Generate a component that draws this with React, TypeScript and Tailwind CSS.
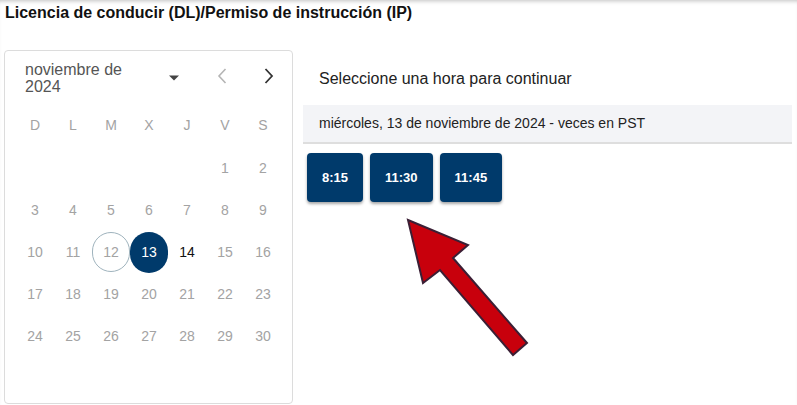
import React from "react";

const NAVY = "bg-[#003a6b]";

const weeks: (number | null)[][] = [
  [null, null, null, null, null, 1, 2],
  [3, 4, 5, 6, 7, 8, 9],
  [10, 11, 12, 13, 14, 15, 16],
  [17, 18, 19, 20, 21, 22, 23],
  [24, 25, 26, 27, 28, 29, 30],
];

function Day({ d }: { d: number | null }) {
  if (d === null) return <div className="h-[42px]" />;
  let inner: React.ReactNode;
  if (d === 13) {
    inner = (
      <div className={`w-[41px] h-[41px] rounded-full ${NAVY} text-white flex items-center justify-center`}>
        13
      </div>
    );
  } else if (d === 12) {
    inner = (
      <div className="w-[40px] h-[40px] rounded-full border border-[#9fb3bd] text-[#a3a3a3] flex items-center justify-center">
        12
      </div>
    );
  } else {
    inner = <span className={d === 14 ? "text-[#111]" : "text-[#a3a3a3]"}>{d}</span>;
  }
  return (
    <div className="h-[42px] w-[38px] flex items-center justify-center overflow-visible">
      {inner}
    </div>
  );
}

export default function App() {
  return (
    <div
      className="relative w-[797px] h-[405px] bg-white overflow-hidden shadow-[inset_0_4px_4px_-3px_rgba(0,0,0,0.25)]"
      style={{ fontFamily: '"Liberation Sans", Arial, sans-serif' }}
    >
      <h1 className="pl-[5px] pt-[2px] text-[16px] leading-[22px] font-bold text-[#111]">
        Licencia de conducir (DL)/Permiso de instrucción (IP)
      </h1>

      <div className="flex mt-[26px] pl-[4px]">
        {/* Calendar card */}
        <div className="w-[289px] h-[354px] border border-[#dcdcdc] rounded-[4px] px-[11px] pt-[10px] shrink-0">
          <div className="flex items-start h-[40px]">
            <div className="w-[130px] pl-[9px] text-[16px] leading-[17px] text-[#555]">
              noviembre de
              <br />
              2024
            </div>
            <svg width="12" height="8" viewBox="0 0 12 8" className="mt-[13px] ml-[22px]">
              <path d="M1 1.5 L11 1.5 L6 6.5 Z" fill="#444" />
            </svg>
            <svg width="12" height="18" viewBox="0 0 12 18" className="mt-[6px] ml-[36px]">
              <path d="M9.5 2 L3 9 L9.5 16" fill="none" stroke="#b5b5b5" strokeWidth="1.6" />
            </svg>
            <svg width="12" height="18" viewBox="0 0 12 18" className="mt-[6px] ml-[35px]">
              <path d="M2.5 2 L9 9 L2.5 16" fill="none" stroke="#333" strokeWidth="1.8" />
            </svg>
          </div>
          <div className="grid grid-cols-[repeat(7,38px)] text-[14px] text-[#a3a3a3] mt-[8px]">
            {["D", "L", "M", "X", "J", "V", "S"].map((w) => (
              <div key={w} className="h-[32px] flex items-center justify-center">
                {w}
              </div>
            ))}
          </div>
          <div className="grid grid-cols-[repeat(7,38px)] text-[14px] mt-[6px]">
            {weeks.flat().map((d, i) => (
              <Day key={i} d={d} />
            ))}
          </div>
        </div>

        {/* Right side */}
        <div className="flex-1 pl-[10px] pr-[5px]">
          <div className="pl-[16px] pt-[19px] h-[55px] text-[16px] leading-[20px] text-[#222]">
            Seleccione una hora para continuar
          </div>
          <div className="h-[39px] bg-[#f3f4f7] border-b-[2px] border-[#dedede] flex items-center pl-[16px] text-[14px] text-[#222]">
            miércoles, 13 de noviembre de 2024 - veces en PST
          </div>
          <div className="flex gap-[7px] pl-[4px] mt-[9px]">
            {["8:15", "11:30", "11:45"].map((t) => (
              <button
                key={t}
                className={`h-[49px] px-[15px] ${NAVY} text-white text-[13px] font-bold rounded-[4px] shadow-[0_2px_3px_rgba(0,0,0,0.35)]`}
              >
                {t}
              </button>
            ))}
          </div>
        </div>
      </div>

      {/* Annotation arrow */}
      <svg className="absolute left-0 top-0 pointer-events-none" width="797" height="405">
        <polygon
          points="408,220 468,245 453,258 527,343 513,355 440,270 423,283"
          fill="#c8000c"
          stroke="#3b1f35"
          strokeWidth="2"
          strokeLinejoin="miter"
        />
      </svg>
    </div>
  );
}
